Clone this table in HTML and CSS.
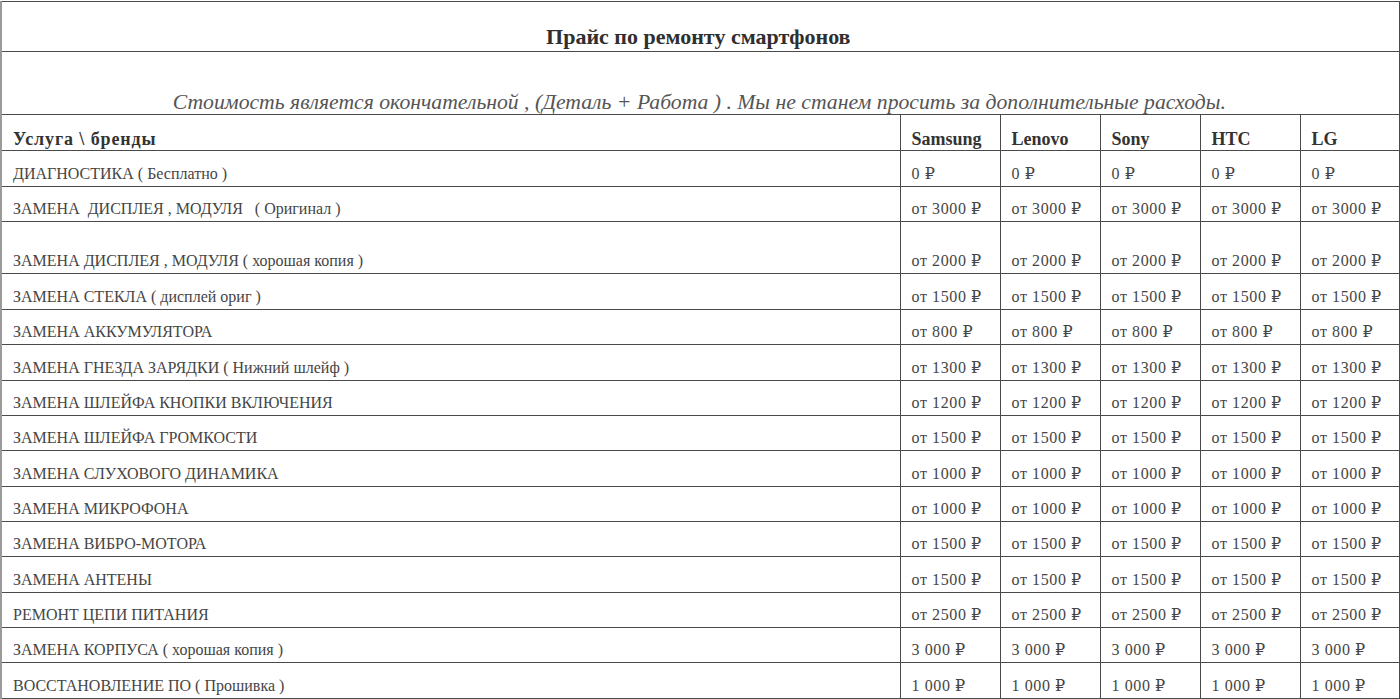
FILE: index.html
```html
<!DOCTYPE html>
<html lang="ru">
<head>
<meta charset="utf-8">
<title>Прайс по ремонту смартфонов</title>
<link rel="stylesheet" href="styles.css">
</head>
<body>
<table class="price">
  <colgroup>
    <col class="c-service">
    <col class="c-brand">
    <col class="c-brand">
    <col class="c-brand">
    <col class="c-brand">
    <col class="c-brand-last">
  </colgroup>
  <tbody>
    <tr class="row-title"><td colspan="6" class="title">Прайс по ремонту смартфонов</td></tr>
    <tr class="row-sub"><td colspan="6" class="subtitle">Стоимость является окончательной , (Деталь + Работа ) . Мы не станем просить за дополнительные расходы.</td></tr>
    <tr class="row-head r36">
      <th class="h-service">Услуга \ бренды</th><th>Samsung</th><th>Lenovo</th><th>Sony</th><th>HTC</th><th>LG</th>
    </tr>
    <tr class="r36"><td>ДИАГНОСТИКА ( Бесплатно )</td><td>0 ₽</td><td>0 ₽</td><td>0 ₽</td><td>0 ₽</td><td>0 ₽</td></tr>
    <tr class="r35"><td>ЗАМЕНА&nbsp; ДИСПЛЕЯ , МОДУЛЯ &nbsp; ( Оригинал )</td><td>от 3000 ₽</td><td>от 3000 ₽</td><td>от 3000 ₽</td><td>от 3000 ₽</td><td>от 3000 ₽</td></tr>
    <tr class="r52"><td>ЗАМЕНА ДИСПЛЕЯ , МОДУЛЯ ( хорошая копия )</td><td>от 2000 ₽</td><td>от 2000 ₽</td><td>от 2000 ₽</td><td>от 2000 ₽</td><td>от 2000 ₽</td></tr>
    <tr class="r36"><td>ЗАМЕНА СТЕКЛА ( дисплей ориг )</td><td>от 1500 ₽</td><td>от 1500 ₽</td><td>от 1500 ₽</td><td>от 1500 ₽</td><td>от 1500 ₽</td></tr>
    <tr class="r35"><td>ЗАМЕНА АККУМУЛЯТОРА</td><td>от 800 ₽</td><td>от 800 ₽</td><td>от 800 ₽</td><td>от 800 ₽</td><td>от 800 ₽</td></tr>
    <tr class="r36"><td>ЗАМЕНА ГНЕЗДА ЗАРЯДКИ ( Нижний шлейф )</td><td>от 1300 ₽</td><td>от 1300 ₽</td><td>от 1300 ₽</td><td>от 1300 ₽</td><td>от 1300 ₽</td></tr>
    <tr class="r35"><td>ЗАМЕНА ШЛЕЙФА КНОПКИ ВКЛЮЧЕНИЯ</td><td>от 1200 ₽</td><td>от 1200 ₽</td><td>от 1200 ₽</td><td>от 1200 ₽</td><td>от 1200 ₽</td></tr>
    <tr class="r35"><td>ЗАМЕНА ШЛЕЙФА ГРОМКОСТИ</td><td>от 1500 ₽</td><td>от 1500 ₽</td><td>от 1500 ₽</td><td>от 1500 ₽</td><td>от 1500 ₽</td></tr>
    <tr class="r36"><td>ЗАМЕНА СЛУХОВОГО ДИНАМИКА</td><td>от 1000 ₽</td><td>от 1000 ₽</td><td>от 1000 ₽</td><td>от 1000 ₽</td><td>от 1000 ₽</td></tr>
    <tr class="r35"><td>ЗАМЕНА МИКРОФОНА</td><td>от 1000 ₽</td><td>от 1000 ₽</td><td>от 1000 ₽</td><td>от 1000 ₽</td><td>от 1000 ₽</td></tr>
    <tr class="r35"><td>ЗАМЕНА ВИБРО-МОТОРА</td><td>от 1500 ₽</td><td>от 1500 ₽</td><td>от 1500 ₽</td><td>от 1500 ₽</td><td>от 1500 ₽</td></tr>
    <tr class="r36"><td>ЗАМЕНА АНТЕНЫ</td><td>от 1500 ₽</td><td>от 1500 ₽</td><td>от 1500 ₽</td><td>от 1500 ₽</td><td>от 1500 ₽</td></tr>
    <tr class="r35"><td>РЕМОНТ ЦЕПИ ПИТАНИЯ</td><td>от 2500 ₽</td><td>от 2500 ₽</td><td>от 2500 ₽</td><td>от 2500 ₽</td><td>от 2500 ₽</td></tr>
    <tr class="r35"><td>ЗАМЕНА КОРПУСА ( хорошая копия )</td><td>3 000 ₽</td><td>3 000 ₽</td><td>3 000 ₽</td><td>3 000 ₽</td><td>3 000 ₽</td></tr>
    <tr class="r36"><td>ВОССТАНОВЛЕНИЕ ПО ( Прошивка )</td><td>1 000 ₽</td><td>1 000 ₽</td><td>1 000 ₽</td><td>1 000 ₽</td><td>1 000 ₽</td></tr>
  </tbody>
</table>
</body>
</html>
```

FILE: styles.css
```css
html, body {
  margin: 0;
  padding: 0;
  background: #ffffff;
}

body {
  font-family: "Liberation Serif", "DejaVu Serif", serif;
  color: #454545;
  overflow: hidden;
}

.price {
  border-collapse: collapse;
  table-layout: fixed;
  width: 1398px;
  margin-top: 1px;
  border-left: 2px solid #9a9a9a;
}

.c-service { width: 899px; }
.c-brand { width: 100px; }
.c-brand-last { width: 99px; }

.price td,
.price th {
  box-sizing: border-box;
  border: 1px solid #4a4a4a;
  padding: 0 4px 3px 11px;
  vertical-align: bottom;
  text-align: left;
  font-size: 16px;
  line-height: 18px;
  white-space: nowrap;
  overflow: hidden;
}

.price td + td {
  letter-spacing: 0.6px;
}

.price th {
  font-weight: bold;
  font-size: 18px;
  padding-bottom: 2px;
  color: #333333;
}

.price .h-service {
  letter-spacing: 0.9px;
}

.price .title {
  height: 50px;
  text-align: center;
  font-weight: bold;
  font-size: 22px;
  line-height: 24px;
  color: #2f2f2f;
  padding: 0 4px 2px 0;
  letter-spacing: 0;
}

.price .subtitle {
  height: 63px;
  text-align: center;
  font-style: italic;
  font-size: 21.7px;
  line-height: 24px;
  color: #555555;
  padding: 0 2px 0 0;
  letter-spacing: 0;
}

.r35 td { height: 35px; }
.r36 td, .r36 th { height: 36px; }
.r52 td { height: 52px; }
```
